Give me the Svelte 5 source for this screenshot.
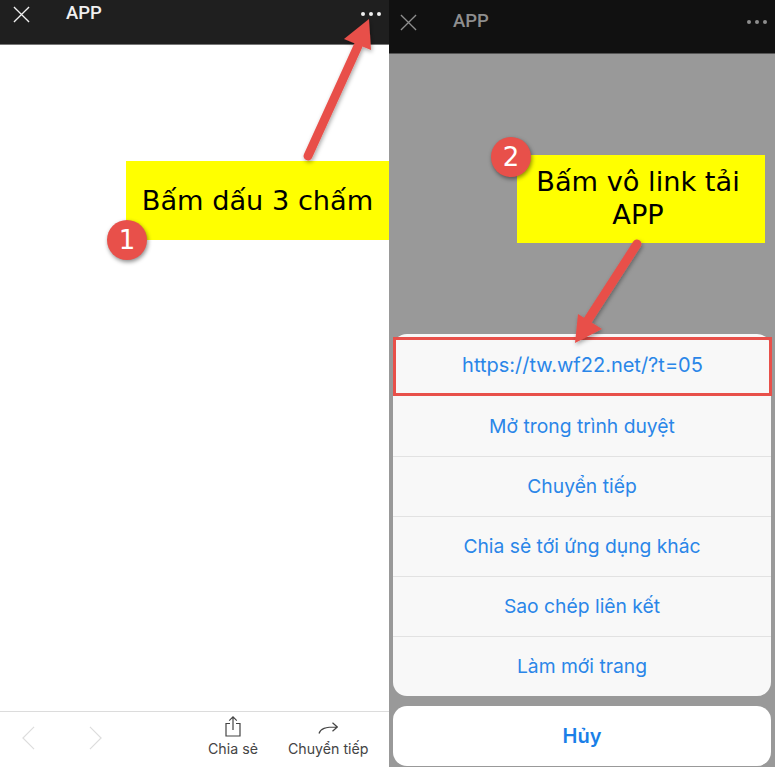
<script>
    let actions = ['Mở trong trình duyệt', 'Chuyển tiếp', 'Chia sẻ tới ứng dụng khác', 'Sao chép liên kết', 'Làm mới trang']
</script>

<div class="page">
    <div class="panel left">
        <div class="bar">
            <svg class="close" viewBox="0 0 18 18"><path d="M1 1 L17 17 M17 1 L1 17" /></svg>
            <span class="title">APP</span>
            <span class="dots"><i></i><i></i><i></i></span>
        </div>
        <div class="blank"></div>
        <div class="footer">
            <div class="nav">
                <svg viewBox="0 0 14 26"><path d="M13 1 L1 13 L13 25" /></svg>
                <svg viewBox="0 0 14 26"><path d="M1 1 L13 13 L1 25" /></svg>
            </div>
            <div class="tool share">
                <svg viewBox="0 0 16 21"><path d="M5 7.5 H1 V20 H15 V7.5 H11 M8 14 V1 M4.2 4.6 L8 0.9 L11.8 4.6" /></svg>
                <span>Chia sẻ</span>
            </div>
            <div class="tool forward">
                <svg viewBox="0 0 20 12"><path d="M1 11.5 C2.5 6.5 7 5 19 5 M14.5 0.7 L19.3 5 L14.5 9.3" /></svg>
                <span>Chuyển tiếp</span>
            </div>
        </div>

        <div class="note note-one">Bấm dấu 3 chấm</div>
        <div class="badge badge-one">1</div>
    </div>

    <div class="panel right">
        <div class="bar dim">
            <svg class="close" viewBox="0 0 18 18"><path d="M1 1 L17 17 M17 1 L1 17" /></svg>
            <span class="title">APP</span>
            <span class="dots"><i></i><i></i><i></i></span>
        </div>
        <div class="overlay">
            <div class="sheet">
                <div class="row link">https://tw.wf22.net/?t=05</div>
                {#each actions as a}
                    <div class="row">{a}</div>
                {/each}
            </div>
            <div class="cancel">Hủy</div>
        </div>

        <div class="note note-two">Bấm vô link tải<br>APP</div>
        <div class="badge badge-two">2</div>
    </div>

    <svg class="arrows" viewBox="0 0 775 767">
        <defs>
            <filter id="shadow" x="-20%" y="-20%" width="140%" height="140%">
                <feDropShadow dx="1" dy="2" stdDeviation="2" flood-color="#000" flood-opacity="0.35" />
            </filter>
        </defs>
        <g filter="url(#shadow)">
            <path class="stroke" d="M308 156 L358 46" />
            <path class="head" d="M369 19 L371 50 L344 39 Z" />
            <path class="stroke" d="M637 244 L586 323" />
            <path class="head" d="M575 343 L578 314 L602 329 Z" />
        </g>
    </svg>
</div>

<style>
    :global(body) {
        margin: 0;
    }
    .page {
        position: relative;
        display: flex;
        width: 775px;
        height: 767px;
        overflow: hidden;
        font-family: "Liberation Sans", Arial, sans-serif;
    }
    .panel {
        position: relative;
        height: 100%;
        display: flex;
        flex-direction: column;
    }
    .left {
        width: 389px;
        background: #fff;
    }
    .right {
        width: 386px;
        background: #999;
    }
    .bar {
        box-sizing: border-box;
        height: 45px;
        flex: none;
        display: flex;
        align-items: flex-start;
        padding: 6px 8px 0 13px;
        background: #1f1f1f;
        border-bottom: 1px solid #777;
        color: #f0f0f0;
    }
    .bar.dim {
        height: 54px;
        padding: 14px 8px 0 11px;
        background: #111;
        border-bottom-color: #555;
        color: #8e8e8e;
    }
    .close {
        width: 17px;
        height: 17px;
        fill: none;
        stroke: currentColor;
        stroke-width: 1.4;
    }
    .title {
        margin-left: 36px;
        font-family: Roboto, "Liberation Sans", sans-serif;
        font-size: 18.5px;
        font-weight: 500;
        line-height: 15px;
    }
    .dots {
        margin-left: auto;
        margin-top: 1px;
        display: flex;
        gap: 4px;
    }
    .dots i {
        width: 4px;
        height: 4px;
        margin-top: 5px;
        border-radius: 50%;
        background: currentColor;
    }
    .blank {
        flex: 1;
    }
    .footer {
        box-sizing: border-box;
        height: 56px;
        flex: none;
        display: flex;
        align-items: flex-start;
        padding: 4px 0 0 22px;
        border-top: 1px solid #dcdcdc;
        background: #fff;
    }
    .nav {
        display: flex;
        gap: 54px;
        padding-top: 9px;
    }
    .nav svg {
        width: 13px;
        height: 26px;
        fill: none;
        stroke: #ddd;
        stroke-width: 1.3;
    }
    .tool {
        display: flex;
        flex-direction: column;
        align-items: center;
        font-family: Inter, "Liberation Sans", sans-serif;
        font-size: 14.2px;
        line-height: 16px;
        color: #444;
    }
    .tool svg {
        fill: none;
        stroke: #444;
        stroke-width: 1.2;
    }
    .share {
        margin-left: 106px;
    }
    .share svg {
        width: 16px;
        height: 21px;
        margin-bottom: 4px;
    }
    .forward {
        margin-left: 30px;
    }
    .forward svg {
        width: 20px;
        height: 12px;
        margin: 6px 0 7px;
    }
    .overlay {
        flex: 1;
        display: flex;
        flex-direction: column;
        justify-content: flex-end;
        padding: 0 4px 1px;
    }
    .sheet {
        background: #f8f8f8;
        border-radius: 14px;
        margin-bottom: 10px;
    }
    .row {
        box-sizing: border-box;
        height: 60px;
        padding-bottom: 1px;
        display: flex;
        align-items: center;
        justify-content: center;
        border-top: 1px solid #e2e2e2;
        font-family: Inter, "Liberation Sans", sans-serif;
        font-size: 19.3px;
        color: #2a86e8;
    }
    .row.link {
        margin: 3px -1px 0 0;
        height: 59px;
        padding-bottom: 3px;
        border: 3px solid #e8504a;
        font-size: 20px;
    }
    .row.link + .row {
        border-top: none;
    }
    .cancel {
        height: 60px;
        display: flex;
        align-items: center;
        justify-content: center;
        background: #fff;
        border-radius: 14px;
        font-family: Inter, "Liberation Sans", sans-serif;
        font-size: 20px;
        font-weight: 600;
        color: #1a7fe8;
    }
    .note {
        position: absolute;
        box-sizing: border-box;
        background: #ff0;
        color: #000;
        font-family: "DejaVu Sans", sans-serif;
        font-size: 27.2px;
        text-align: center;
    }
    .note-one {
        left: 126px;
        top: 161px;
        width: 263px;
        height: 79px;
        line-height: 79px;
    }
    .note-two {
        left: 128px;
        top: 155px;
        width: 248px;
        height: 88px;
        padding: 10px 6px 0 0;
        line-height: 33px;
    }
    .badge {
        position: absolute;
        width: 40px;
        height: 40px;
        border-radius: 50%;
        background: #e8504a;
        color: #fff;
        box-shadow: 1px 2px 4px rgba(0, 0, 0, 0.45);
        font-family: "DejaVu Sans", sans-serif;
        font-size: 26px;
        line-height: 40px;
        text-align: center;
    }
    .badge-one {
        left: 107px;
        top: 220px;
    }
    .badge-two {
        left: 102px;
        top: 137px;
    }
    .arrows {
        position: absolute;
        inset: 0;
        width: 775px;
        height: 767px;
        pointer-events: none;
    }
    .stroke {
        fill: none;
        stroke: #e8504a;
        stroke-width: 9;
        stroke-linecap: round;
    }
    .head {
        fill: #e8504a;
    }
</style>
